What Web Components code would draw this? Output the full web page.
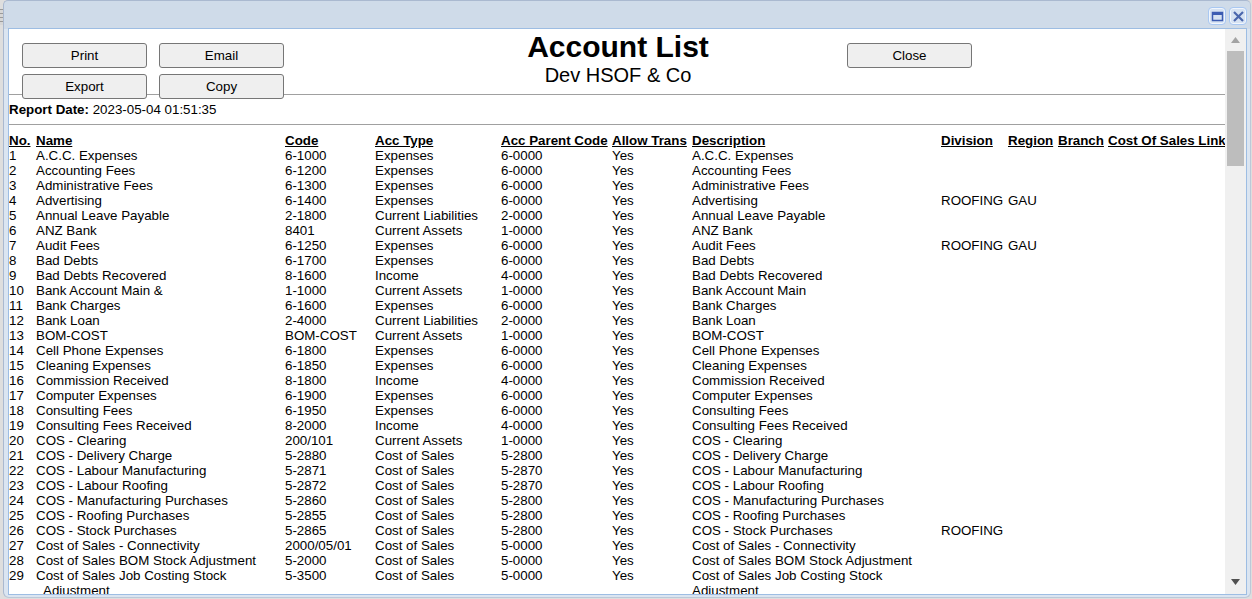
<!DOCTYPE html>
<html lang="en">
<head>
<meta charset="utf-8">
<title>Account List</title>
<style>
html,body{margin:0;padding:0;height:100%;overflow:hidden;background:#dedede;font-family:"Liberation Sans",Arial,sans-serif;font-size:13.3333px;color:#000}
</style>
</head>
<body>
<desktop-edge></desktop-edge>
<account-window>
  <window-control slot="controls" kind="max" label="Maximize"></window-control>
  <window-control slot="controls" kind="close" label="Close window"></window-control>
  <report-header title-text="Account List" subtitle="Dev HSOF &amp; Co">
    <report-button slot="left">Print</report-button>
    <report-button slot="left">Email</report-button>
    <report-button slot="left">Export</report-button>
    <report-button slot="left">Copy</report-button>
    <report-button slot="right">Close</report-button>
  </report-header>
  <report-date date="2023-05-04 01:51:35"></report-date>
  <account-table></account-table>
  <window-scrollbar slot="scrollbar"></window-scrollbar>
</account-window>
<script>
function shadow(el, html){ el.attachShadow({mode:'open'}).innerHTML = html; }

customElements.define('desktop-edge', class extends HTMLElement{
  constructor(){super();shadow(this,`<style>
    :host{display:block;position:absolute;left:0;top:9px;width:3px;height:16px;
      background:repeating-linear-gradient(#9a9a9a 0 1px,#d6d6d6 1px 4px)}
  </style>`);}
});

customElements.define('account-window', class extends HTMLElement{
  constructor(){super();shadow(this,`<style>
    :host{box-sizing:border-box;height:598px;width:1248px;margin-left:3px;
      background:linear-gradient(#cfdbe9 0 28px,#dbe5f1 28px);border:1px solid #aab9d0;border-bottom-color:#bcc8d8;border-right-color:#bcc8d8;border-radius:5px 5px 6px 6px;padding:0 3px 2px 4px;
      display:flex;flex-direction:column;overflow:hidden}
    .bar{flex:none;height:27px;display:flex;justify-content:flex-end;align-items:flex-start;gap:3px;padding:6px 0 0;box-sizing:border-box}
    .body{flex:1;min-height:0;display:flex;background:#fff;border:1px solid #9dbde3}
    .main{flex:1;min-width:0;overflow:hidden}
    ::slotted(window-scrollbar){flex:none}
  </style>
  <div class="bar"><slot name="controls"></slot></div>
  <div class="body"><div class="main"><slot></slot></div><slot name="scrollbar"></slot></div>`);}
});

customElements.define('window-control', class extends HTMLElement{
  constructor(){super();
    const kind=this.getAttribute('kind');
    const icon = kind==='max'
      ? '<rect x="3.5" y="4.5" width="10" height="8" fill="none" stroke="#3c5cb2" stroke-width="1.5"/><rect x="3" y="4" width="11" height="3" fill="#3c5cb2"/>'
      : '<path d="M4 4 13 13M13 4 4 13" fill="none" stroke="#4a66ad" stroke-width="2.2"/>';
    shadow(this,`<style>
      :host{display:block;width:18px;height:18px;box-sizing:border-box;border:1px solid #a9c8f2;border-radius:4px;background:#d6e2f2;box-shadow:inset 0 0 0 1px #f1f6fd}
      svg{display:block;width:17px;height:17px;margin:0}
    </style><svg viewBox="0 0 17 17" role="img" aria-label="${this.getAttribute('label')}">${icon}</svg>`);
  }
});

customElements.define('report-button', class extends HTMLElement{
  constructor(){super();shadow(this,`<style>
    :host{display:block;width:125px;height:25px;position:relative;z-index:1}
    button{display:block;width:100%;height:100%;box-sizing:border-box;margin:0;padding:0;background:#efefef;border:1px solid #767676;border-radius:3px;
      font:13.3333px "Liberation Sans",Arial,sans-serif;color:#000}
  </style><button type="button"><slot></slot></button>`);}
});

customElements.define('report-header', class extends HTMLElement{
  constructor(){super();
    const t=this.getAttribute('title-text'), s=this.getAttribute('subtitle').replace('&','&amp;');
    shadow(this,`<style>
    :host{display:block;height:66px;box-sizing:border-box;border-bottom:1px solid #a0a0a0}
    .row{display:grid;grid-template-columns:459px 300px 458px;height:65px}
    .left{display:grid;grid-template-columns:125px 125px;grid-auto-rows:25px;gap:6px 12px;padding:14px 0 0 13px;align-content:start}
    .center{text-align:center}
    h1{margin:0;font:bold 30px/35px "Liberation Sans",Arial,sans-serif;}
    h2{margin:0;font:normal 20px/22px "Liberation Sans",Arial,sans-serif;}
    .right{padding:14px 0 0 79px}
  </style><div class="row">
    <div class="left"><slot name="left"></slot></div>
    <div class="center"><h1>${t}</h1><h2>${s}</h2></div>
    <div class="right"><slot name="right"></slot></div>
  </div>`);}
});

customElements.define('report-date', class extends HTMLElement{
  constructor(){super();shadow(this,`<style>
    :host{display:block;height:30px;box-sizing:border-box;border-bottom:1px solid #a0a0a0;padding-top:7px;line-height:15px}
    b{font-weight:bold}
  </style><b>Report Date:</b> ${this.getAttribute('date')}`);}
});

const ROWS=[
["A.C.C. Expenses","6-1000","Expenses","6-0000","A.C.C. Expenses"],
["Accounting Fees","6-1200","Expenses","6-0000","Accounting Fees"],
["Administrative Fees","6-1300","Expenses","6-0000","Administrative Fees"],
["Advertising","6-1400","Expenses","6-0000","Advertising","ROOFING","GAU"],
["Annual Leave Payable","2-1800","Current Liabilities","2-0000","Annual Leave Payable"],
["ANZ Bank","8401","Current Assets","1-0000","ANZ Bank"],
["Audit Fees","6-1250","Expenses","6-0000","Audit Fees","ROOFING","GAU"],
["Bad Debts","6-1700","Expenses","6-0000","Bad Debts"],
["Bad Debts Recovered","8-1600","Income","4-0000","Bad Debts Recovered"],
["Bank Account Main &","1-1000","Current Assets","1-0000","Bank Account Main"],
["Bank Charges","6-1600","Expenses","6-0000","Bank Charges"],
["Bank Loan","2-4000","Current Liabilities","2-0000","Bank Loan"],
["BOM-COST","BOM-COST","Current Assets","1-0000","BOM-COST"],
["Cell Phone Expenses","6-1800","Expenses","6-0000","Cell Phone Expenses"],
["Cleaning Expenses","6-1850","Expenses","6-0000","Cleaning Expenses"],
["Commission Received","8-1800","Income","4-0000","Commission Received"],
["Computer Expenses","6-1900","Expenses","6-0000","Computer Expenses"],
["Consulting Fees","6-1950","Expenses","6-0000","Consulting Fees"],
["Consulting Fees Received","8-2000","Income","4-0000","Consulting Fees Received"],
["COS - Clearing","200/101","Current Assets","1-0000","COS - Clearing"],
["COS - Delivery Charge","5-2880","Cost of Sales","5-2800","COS - Delivery Charge"],
["COS - Labour Manufacturing","5-2871","Cost of Sales","5-2870","COS - Labour Manufacturing"],
["COS - Labour Roofing","5-2872","Cost of Sales","5-2870","COS - Labour Roofing"],
["COS - Manufacturing Purchases","5-2860","Cost of Sales","5-2800","COS - Manufacturing Purchases"],
["COS - Roofing Purchases","5-2855","Cost of Sales","5-2800","COS - Roofing Purchases"],
["COS - Stock Purchases","5-2865","Cost of Sales","5-2800","COS - Stock Purchases","ROOFING"],
["Cost of Sales - Connectivity","2000/05/01","Cost of Sales","5-0000","Cost of Sales - Connectivity"],
["Cost of Sales BOM Stock Adjustment","5-2000","Cost of Sales","5-0000","Cost of Sales BOM Stock Adjustment"],
["Cost of Sales Job Costing Stock Adjustment","5-3500","Cost of Sales","5-0000","Cost of Sales Job Costing Stock Adjustment"]
];
const esc=s=>s.replace(/&/g,'&amp;');
customElements.define('account-table', class extends HTMLElement{
  constructor(){super();
    const widths=[27,249,90,126,111,80,249,67,50,50,118];
    const heads=["No.","Name","Code","Acc Type","Acc Parent Code","Allow Trans","Description","Division","Region","Branch","Cost Of Sales Link"];
    const body=ROWS.map((r,i)=>`<tr><td>${i+1}</td><td class="hang">${esc(r[0])}</td><td>${r[1]}</td><td>${r[2]}</td><td>${r[3]}</td><td>Yes</td><td>${esc(r[4])}</td><td>${r[5]||''}</td><td>${r[6]||''}</td><td></td><td></td></tr>`).join('');
    shadow(this,`<style>
      :host{display:block;padding-top:8px}
      table{table-layout:fixed;border-collapse:collapse;width:1217px}
      th,td{padding:0;text-align:left;vertical-align:top;line-height:15px;font-size:13.3333px;white-space:normal}
      th{font-weight:bold;text-decoration:underline;white-space:nowrap}
      .hang{padding-left:7px;text-indent:-7px}
    </style><table><colgroup>${widths.map(w=>`<col style="width:${w}px">`).join('')}</colgroup>
    <thead><tr>${heads.map(h=>`<th>${h}</th>`).join('')}</tr></thead><tbody>${body}</tbody></table>`);
  }
});

customElements.define('window-scrollbar', class extends HTMLElement{
  constructor(){super();shadow(this,`<style>
    :host{display:flex;flex-direction:column;width:21px;background:#f0f0f0;box-sizing:border-box}
    .cap{flex:none;height:22px;display:flex;justify-content:center;align-items:center}
    .cap.down{margin-top:auto;height:15px;align-items:flex-start}
    svg{display:block;width:9px;height:6px}
    .thumb{flex:none;height:115px;margin:0 2px;background:#bdbdbd}
  </style>
  <div class="cap"><svg viewBox="0 0 9 6"><path d="M4.5 0 9 6H0z" fill="#a3a3a3"/></svg></div>
  <div class="thumb"></div>
  <div class="cap down"><svg viewBox="0 0 9 6"><path d="M0 0H9L4.5 6z" fill="#505050"/></svg></div>`);}
});
</script>
</body>
</html>
